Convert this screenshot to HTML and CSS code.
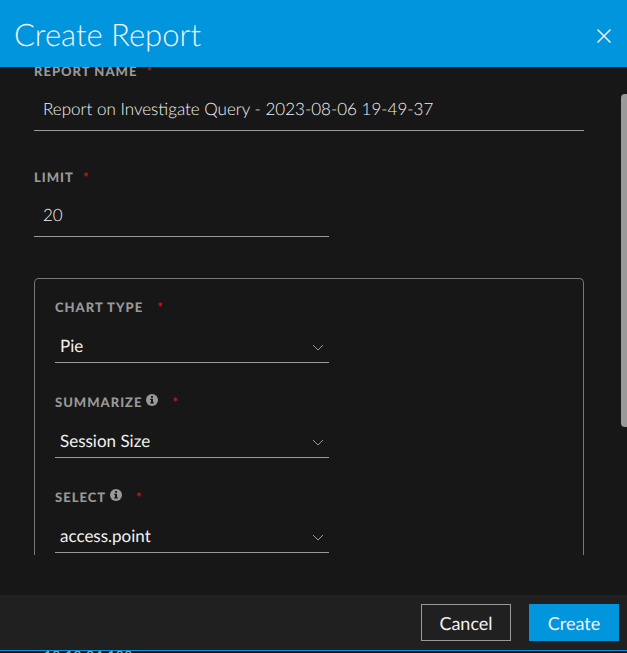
FILE: index.html
```html
<!DOCTYPE html>
<html lang="en">
  <head>
    <meta charset="UTF-8" />
    <meta name="viewport" content="width=device-width, initial-scale=1.0" />
    <title>Create Report</title>
    <link rel="stylesheet" href="styles.css">
  </head>
  <body>
    <div class="dialog" role="dialog" aria-labelledby="dialogTitle">
      <header class="dialog-header">
        <h2 id="dialogTitle">Create Report</h2>
        <button type="button" class="close-button" aria-label="Close">
          <svg width="16" height="16" viewBox="0 0 16 16" fill="none" stroke="currentColor" stroke-width="1.5">
            <path d="M1.5 1.5l13 13M14.5 1.5l-13 13" />
          </svg>
        </button>
      </header>

      <div class="dialog-body">
        <form id="reportForm" class="report-form">
          <div class="field">
            <label for="reportName">Report Name <span class="required">*</span></label>
            <input type="text" id="reportName" value="Report on Investigate Query - 2023-08-06 19-49-37" required />
          </div>
          <div class="field field-short">
            <label for="limit">Limit <span class="required">*</span></label>
            <input type="text" id="limit" value="20" required />
          </div>

          <div class="chart-options">
            <div class="select-field">
              <label for="chartType">Chart Type <span class="required wide">*</span></label>
              <div class="select-wrap">
                <select id="chartType">
                  <option>Pie</option>
                </select>
                <svg class="chevron" width="12" height="8" viewBox="0 0 12 8" fill="none" stroke="currentColor">
                  <path d="M1 1l5 5 5-5" />
                </svg>
              </div>
            </div>
            <div class="select-field">
              <label for="summarize">Summarize
                <svg class="info" width="12" height="12" viewBox="0 0 12 12">
                  <circle cx="6" cy="6" r="6" fill="#999" />
                  <path d="M5 2h2v1.700H5zM4.200 4.700H7v3.600h.9v1.200H4.200V8.300H5V5.900h-.8z" fill="#171717" />
                </svg>
                <span class="required wide">*</span>
              </label>
              <div class="select-wrap">
                <select id="summarize">
                  <option>Session Size</option>
                </select>
                <svg class="chevron" width="12" height="8" viewBox="0 0 12 8" fill="none" stroke="currentColor">
                  <path d="M1 1l5 5 5-5" />
                </svg>
              </div>
            </div>
            <div class="select-field">
              <label for="selectMeta">Select
                <svg class="info" width="12" height="12" viewBox="0 0 12 12">
                  <circle cx="6" cy="6" r="6" fill="#999" />
                  <path d="M5 2h2v1.700H5zM4.200 4.700H7v3.600h.9v1.200H4.200V8.300H5V5.900h-.8z" fill="#171717" />
                </svg>
                <span class="required wide">*</span>
              </label>
              <div class="select-wrap">
                <select id="selectMeta">
                  <option>access.point</option>
                </select>
                <svg class="chevron" width="12" height="8" viewBox="0 0 12 8" fill="none" stroke="currentColor">
                  <path d="M1 1l5 5 5-5" />
                </svg>
              </div>
            </div>
          </div>
        </form>
        <div class="scroll-thumb"></div>
      </div>

      <footer class="dialog-footer">
        <button type="button" class="btn">Cancel</button>
        <button type="submit" form="reportForm" class="btn btn-primary">Create</button>
      </footer>
    </div>
    <div class="page-behind">10.10.24.100</div>
  </body>
</html>
```

FILE: styles.css
```css
* {
  box-sizing: border-box;
}

body {
  margin: 0;
  height: 100vh;
  display: flex;
  flex-direction: column;
  overflow: hidden;
  background: #0c0c0c;
  color: #f2f2f2;
  font-family: Lato, sans-serif;
  text-rendering: geometricPrecision;
}

.dialog {
  flex: 1;
  min-height: 0;
  display: flex;
  flex-direction: column;
  background: #171717;
  border-bottom: 1px solid #0095dd;
}

.dialog-header {
  display: flex;
  justify-content: space-between;
  align-items: center;
  padding: 12px 15px 11px 14px;
  background: #0095dd;
}

.dialog-header h2 {
  margin: 0;
  font-size: 31px;
  font-weight: 300;
  line-height: 44px;
}

.close-button {
  display: flex;
  padding: 4px 0 0;
  border: none;
  background: none;
  color: #f2f2f2;
  cursor: pointer;
}

/* form is scrolled a little under the header */
.dialog-body {
  flex: 1;
  min-height: 0;
  position: relative;
  overflow: hidden;
}

.report-form {
  margin-top: -5px;
  padding: 0 43px 0 34px;
}

.field {
  margin-bottom: 37px;
}

.field-short {
  width: 295px;
  max-width: 100%;
  margin-bottom: 41px;
}

label {
  display: flex;
  align-items: center;
  height: 18px;
  color: #999;
  font-size: 13px;
  font-weight: 900;
  letter-spacing: 1px;
  text-transform: uppercase;
}

.required {
  margin-left: 9px;
  color: #c81414;
}

.required.wide {
  margin-left: 14px;
}

.info {
  margin: 0 0 4px 4px;
}

input[type="text"],
select {
  display: block;
  width: 100%;
  border: none;
  border-bottom: 1px solid #999;
  border-radius: 0;
  outline: none;
  background: none;
  color: #f2f2f2;
  font-family: inherit;
  font-size: 17px;
  text-rendering: inherit;
}

input[type="text"] {
  height: 51px;
  padding: 14px 9px 8px;
  font-weight: 300;
}

select {
  height: 47px;
  padding: 17px 30px 5px 5px;
  appearance: none;
}

.chart-options {
  padding: 19px 20px 2px;
  border: 1px solid #777;
  border-bottom: none;
  border-radius: 5px 5px 0 0;
}

.select-field {
  width: 274px;
  max-width: 100%;
}

.select-field + .select-field {
  margin-top: 30px;
}

.select-wrap {
  position: relative;
}

.chevron {
  position: absolute;
  right: 5px;
  top: 28px;
  color: #999;
  pointer-events: none;
}

.scroll-thumb {
  position: absolute;
  top: 27px;
  right: 0;
  width: 6px;
  height: 63%;
  border-radius: 4px 0 0 4px;
  background: #999;
}

.dialog-footer {
  display: flex;
  justify-content: flex-end;
  gap: 18px;
  padding: 9px 8px;
  background: #202020;
}

.btn {
  min-width: 90px;
  height: 37px;
  padding: 1px 17px 0;
  border: 1px solid #999;
  background: none;
  color: #f2f2f2;
  font-family: inherit;
  font-size: 18px;
  text-rendering: inherit;
  cursor: pointer;
}

.btn-primary {
  border-color: #0095dd;
  background: #0095dd;
}

.page-behind {
  height: 2px;
  padding-left: 44px;
  overflow: hidden;
  color: #999;
  font-size: 13px;
  font-weight: 900;
  line-height: 8px;
  letter-spacing: 1px;
}
```
